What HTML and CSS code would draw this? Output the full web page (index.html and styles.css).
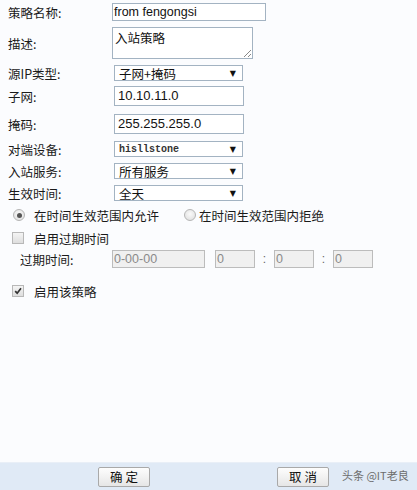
FILE: index.html
```html
<!DOCTYPE html>
<html lang="zh">
<head>
<meta charset="utf-8">
<title>入站策略</title>
<link rel="stylesheet" href="styles.css">
</head>
<body>
<div class="page">
  <form class="form">
    <div class="row r1"><span class="label">策略名称:</span><span class="field wide">from fengongsi</span></div>
    <div class="row r2"><span class="label">描述:</span><span class="area">入站策略<i class="grip"></i></span></div>
    <div class="row r3"><span class="label">源IP类型:</span><span class="select">子网+掩码<b class="arrow">▼</b></span></div>
    <div class="row r4"><span class="label">子网:</span><span class="field">10.10.11.0</span></div>
    <div class="row r5"><span class="label">掩码:</span><span class="field">255.255.255.0</span></div>
    <div class="row r6"><span class="label">对端设备:</span><span class="select mono">hisllstone<b class="arrow">▼</b></span></div>
    <div class="row r7"><span class="label">入站服务:</span><span class="select">所有服务<b class="arrow">▼</b></span></div>
    <div class="row r8"><span class="label">生效时间:</span><span class="select">全天<b class="arrow">▼</b></span></div>

    <div class="row opt radios">
      <span class="choice"><i class="radio on"></i>在时间生效范围内允许</span>
      <span class="choice second"><i class="radio"></i>在时间生效范围内拒绝</span>
    </div>
    <div class="row opt check1"><span class="choice"><i class="box"></i>启用过期时间</span></div>
    <div class="row expiry">
      <span class="label sub">过期时间:</span>
      <span class="dim date">0-00-00</span>
      <span class="dim num">0</span><span class="colon">:</span>
      <span class="dim num">0</span><span class="colon">:</span>
      <span class="dim num">0</span>
    </div>
    <div class="row opt check2"><span class="choice"><i class="box checked"><svg viewBox="0 0 12 12" width="12" height="12"><path d="M2.6 6.2 L5 8.6 L9.6 2.6" fill="none" stroke="#333" stroke-width="2"/></svg></i>启用该策略</span></div>
  </form>

  <div class="footer">
    <span class="btn ok">确 定</span>
    <span class="btn cancel">取 消</span>
    <span class="mark">头条 @IT老良</span>
  </div>
</div>
</body>
</html>
```

FILE: styles.css
```css
* { box-sizing: border-box; }

html, body {
  margin: 0;
  padding: 0;
  background: #fbfcfe;
}

body {
  font-family: "Liberation Sans", "Noto Sans CJK SC", sans-serif;
  font-size: 12px;
  color: #111;
}

.page {
  width: 417px;
  height: 490px;
  display: flex;
  flex-direction: column;
}

.form {
  flex: 1;
  padding-top: 1px;
  display: flex;
  flex-direction: column;
}

.row {
  display: flex;
  align-items: center;
}

.r1 { height: 22px; }
.r2 { height: 40px; }
.r3 { height: 20px; }
.r4 { height: 26px; }
.r5 { height: 30px; }
.r6 { height: 20px; }
.r7 { height: 24px; }
.r8 { height: 20px; }
.radios { height: 24px; }
.check1 { height: 22px; }
.expiry { height: 20px; }
.check2 { height: 22px; margin-top: 11px; }

.label {
  width: 112px;
  padding-left: 8px;
  font-family: "Noto Sans CJK SC", sans-serif;
  font-size: 12.5px;
  color: #1a1a1a;
  flex: none;
}

.label.sub {
  padding-left: 20px;
}

.field {
  width: 130px;
  height: 20px;
  margin-left: 2px;
  border: 1px solid #a3b3c2;
  background: #fff;
  padding: 0 3px;
  line-height: 18px;
  font-size: 13px;
  color: #111;
}

.field.wide {
  width: 154px;
  height: 18px;
  margin-left: 0;
  line-height: 16px;
  padding: 0 1px;
  font-size: 12.5px;
}

.area {
  position: relative;
  width: 141px;
  height: 32px;
  border: 1px solid #a3b3c2;
  background: #fff;
  padding: 2px 2px;
  font-family: "Noto Sans CJK SC", sans-serif;
  font-size: 12.5px;
  line-height: 15px;
}

/* resize handle in the corner of the textarea */
.grip {
  position: absolute;
  right: 1px;
  bottom: 1px;
  width: 7px;
  height: 7px;
  background:
    linear-gradient(135deg, transparent 45%, #888 45%, #888 55%, transparent 55%, transparent 75%, #888 75%, #888 85%, transparent 85%);
}

.select {
  position: relative;
  width: 129px;
  height: 16px;
  margin-left: 2px;
  border: 1px solid #a3b3c2;
  background: #fff;
  padding-left: 4px;
  line-height: 15px;
  font-family: "Noto Sans CJK SC", sans-serif;
  font-size: 12.5px;
  color: #111;
}

.select.mono {
  font-family: "Liberation Mono", monospace;
  font-size: 10px;
  font-weight: bold;
  color: #333;
}

.arrow {
  position: absolute;
  right: 6px;
  top: 0;
  font-family: "DejaVu Sans", sans-serif;
  font-size: 8px;
  font-weight: normal;
  line-height: 15px;
  color: #111;
}

.choice {
  display: flex;
  align-items: center;
  font-family: "Noto Sans CJK SC", sans-serif;
  font-size: 12.5px;
  color: #1a1a1a;
}

.radios .choice:first-child { margin-left: 13px; }
.radios .choice .radio { margin-right: 9px; }
.radios .second { margin-left: 25px; }
.radios .second .radio { margin-right: 3px; }

.radio {
  width: 12px;
  height: 12px;
  border-radius: 50%;
  border: 1px solid #b5b5b5;
  background: radial-gradient(circle at 50% 40%, #fafafa, #dcdcdc);
  display: inline-block;
  position: relative;
}

.radio.on::after {
  content: "";
  position: absolute;
  left: 2.5px;
  top: 2.5px;
  width: 5px;
  height: 5px;
  border-radius: 50%;
  background: #555;
}

.check1 .choice, .check2 .choice { margin-left: 12px; }

.box {
  width: 12px;
  height: 12px;
  border: 1px solid #b8b8b8;
  background: linear-gradient(#f4f4f4, #dedede);
  margin-right: 10px;
  display: inline-flex;
  align-items: center;
  justify-content: center;
}

.box svg { display: block; }

.dim {
  height: 18px;
  border: 1px solid #bcbcbc;
  background: #f0f0f0;
  color: #8a8a8a;
  font-size: 12.5px;
  line-height: 16px;
  padding: 0 1px;
}

.date { width: 93px; }
.num { width: 40px; }
.date + .num { margin-left: 10px; }

.colon {
  width: 19px;
  text-align: center;
  color: #666;
  font-size: 12px;
}

.footer {
  height: 28px;
  flex: none;
  background: #e0eaf6;
  border-top: 1px solid #e9eff7;
  display: flex;
  align-items: center;
  position: relative;
}

.btn {
  height: 20px;
  width: 52px;
  border: 1px solid #a9a9a9;
  border-radius: 2px;
  background: linear-gradient(#fdfdfd, #e6e6e6);
  text-align: center;
  line-height: 18px;
  font-family: "Noto Sans CJK SC", sans-serif;
  font-size: 12.5px;
  color: #111;
}

.ok { margin-left: 98px; }
.cancel { margin-left: 127px; }

.mark {
  margin-left: 13px;
  font-family: "Noto Sans CJK SC", sans-serif;
  font-size: 11px;
  color: #6d6d6d;
  margin-top: -4px;
}
```
